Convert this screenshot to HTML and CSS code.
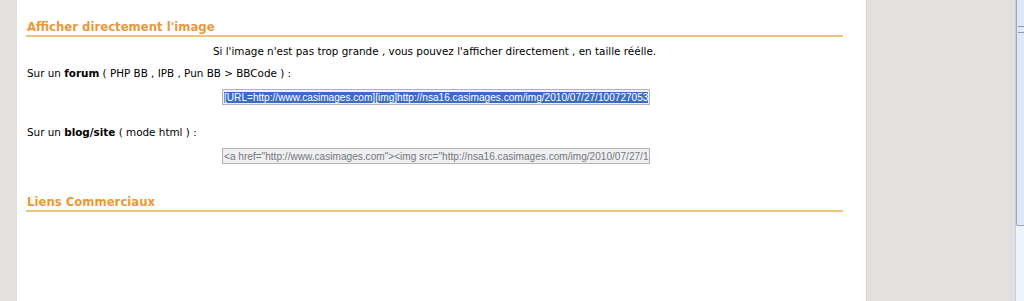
FILE: index.html
```html
<!DOCTYPE html>
<html lang="fr">
<head>
  <meta charset="UTF-8">
  <title>Casimages - Afficher directement l'image</title>
  <link rel="stylesheet" href="styles.css">
</head>
<body>
  <div class="frame">
    <div class="side-left"></div>
    <div class="content">
      <h2 class="title">Afficher directement l'image</h2>
      <p class="intro">Si l'image n'est pas trop grande , vous pouvez l'afficher directement , en taille réélle.</p>

      <p class="label">Sur un <b>forum</b> ( PHP BB , IPB , Pun BB &gt; BBCode ) :</p>
      <div class="code-row">
        <div class="code-box"><span class="selected">[URL=http://www.casimages.com][img]http://nsa16.casimages.com/img/2010/07/27/100727053</span></div>
      </div>

      <p class="label blog">Sur un <b>blog/site</b> ( mode html ) :</p>
      <div class="code-row">
        <div class="code-box">&lt;a href="http://www.casimages.com"&gt;&lt;img src="http://nsa16.casimages.com/img/2010/07/27/1</div>
      </div>

      <h2 class="title pub">Liens Commerciaux</h2>
    </div>
    <div class="side-right"></div>
    <div class="scrollbar">
      <div class="thumb"><span class="grip"></span></div>
    </div>
  </div>
</body>
</html>
```
FILE: styles.css
```css
body{
  margin: 0;
  background-color: #e2e1df;
  font-family: Verdana, "DejaVu Sans", sans-serif;
  font-size: 10.4px;
  color: #000;
}
.frame{
  display: flex;
  height: 301px;
  overflow: hidden;
}
.side-left{
  width: 17px;
  background-color: #e2e1df;
}
.content{
  width: 849px;
  background-color: #fff;
  padding: 0 23px 0 9px;
  box-sizing: border-box;
}
.side-right{
  flex: 1;
  background-color: #e2e1df;
  border-left: 1px solid #d6d5d3;
}
.scrollbar{
  width: 8px;
  background-color: #eef4fb;
  border-left: 1px solid #c6d2e0;
}
.thumb{
  height: 225px;
  background-color: #dde9f8;
  border: 1px solid #9aa9bd;
  border-top: none;
  border-right: none;
  border-radius: 0 0 0 2px;
  position: relative;
}
.grip{
  position: absolute;
  top: 26px;
  left: 1px;
  width: 6px;
  height: 5px;
  border-top: 1px solid #8a98aa;
  border-bottom: 1px solid #8a98aa;
}
.title{
  margin: 20px 0 0 0;
  padding: 0 0 0 1px;
  font-size: 11.7px;
  font-weight: bold;
  color: #e9993c;
  border-bottom: 2px solid #eec47a;
  line-height: 15px;
}
.title.pub{
  margin-top: 31px;
}
.intro{
  text-align: center;
  margin: 7px 0 0 0;
  line-height: 14px;
}
.label{
  margin: 8px 0 0 1px;
  line-height: 14px;
}
.label.blog{
  margin-top: 20px;
}
.code-row{
  padding-left: 196px;
  margin-top: 9px;
}
.code-box{
  width: 428px;
  height: 16px;
  box-sizing: border-box;
  border: 1px solid #b3b3b3;
  background-color: #eef0f4;
  padding: 1px 1px;
  font-family: Arial, "Liberation Sans", sans-serif;
  font-size: 10.1px;
  line-height: 13px;
  color: #777;
  white-space: nowrap;
  overflow: hidden;
}
.selected{
  background-color: #3a6cc2;
  color: #fff;
}
```
